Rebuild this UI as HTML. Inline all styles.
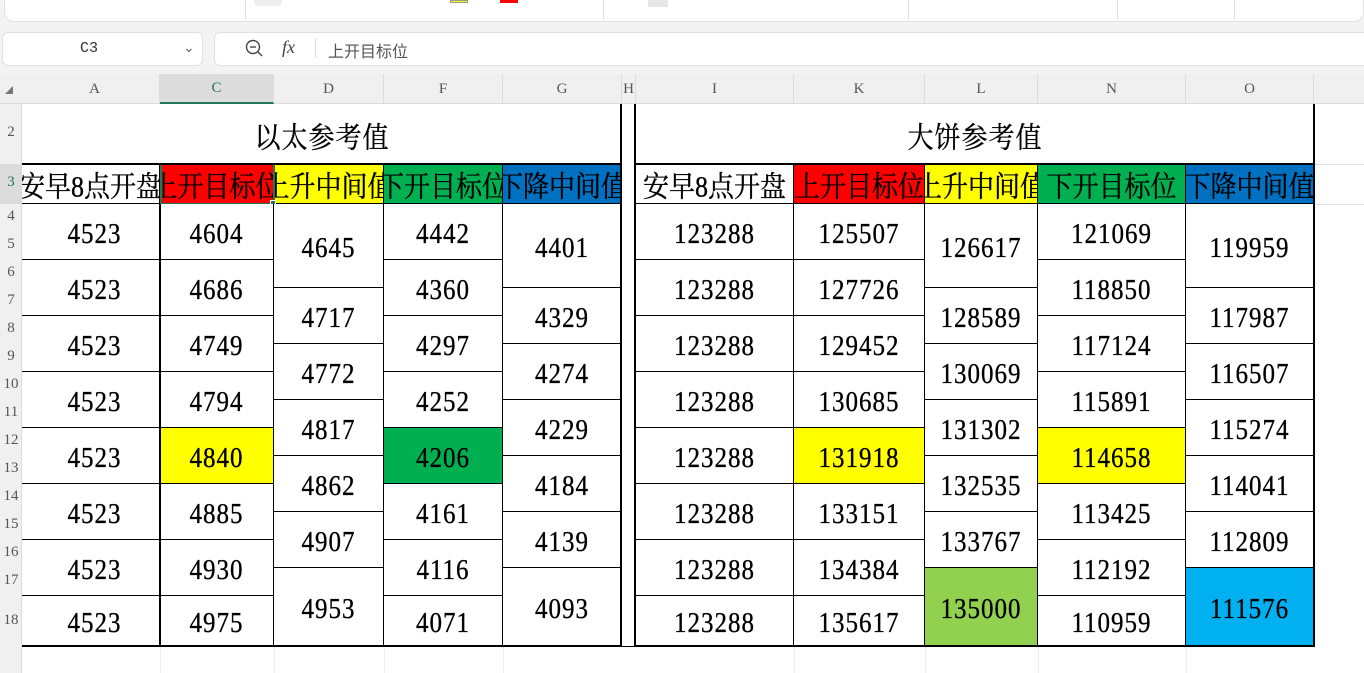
<!DOCTYPE html>
<html><head><meta charset="utf-8"><style>
*{margin:0;padding:0;box-sizing:border-box}
body{width:1364px;height:673px;overflow:hidden;background:#f3f3f3;position:relative;font-family:"Liberation Serif","Noto Serif CJK SC",serif}
.a{position:absolute}
.c{position:absolute;border-right:1px solid #000;border-bottom:1px solid #000;display:flex;align-items:center;justify-content:center;font-size:25px;color:#000;overflow:hidden;white-space:nowrap;background:#fff;padding-top:7px}
.c span{display:inline-block;transform:scale(1,1.12);-webkit-text-stroke:0.3px #000;letter-spacing:1px}
.hd{font-size:26px;padding-top:2px}
.hd span{letter-spacing:0}
.pa{padding-left:8px}
.h{position:absolute;top:74px;height:30px;display:flex;align-items:center;justify-content:center;font:15px "Liberation Serif",serif;color:#555;border-right:1px solid #dcdcdc}
.r{position:absolute;left:0;width:22px;font:15px "Liberation Serif",serif;color:#555;text-align:center}
.y{background:#ffff00}.g{background:#00b050}.lg{background:#92d050}.lb{background:#00b0f0}
</style></head><body>
<div class="a" style="left:4px;top:-10px;width:1360px;height:32px;background:#fff;border-radius:10px;border:1px solid #e2e2e2"></div>
<div class="a" style="left:245px;top:0;width:1px;height:20px;background:#e0e0e0"></div>
<div class="a" style="left:603px;top:0;width:1px;height:20px;background:#e0e0e0"></div>
<div class="a" style="left:908px;top:0;width:1px;height:20px;background:#e0e0e0"></div>
<div class="a" style="left:1117px;top:0;width:1px;height:20px;background:#e0e0e0"></div>
<div class="a" style="left:1234px;top:0;width:1px;height:20px;background:#e0e0e0"></div>
<div class="a" style="left:254px;top:0;width:28px;height:6px;background:#eee;border-radius:0 0 4px 4px"></div>
<div class="a" style="left:450px;top:0;width:18px;height:3px;background:#ff0;border:1px solid #999"></div>
<div class="a" style="left:500px;top:0;width:18px;height:3px;background:#f00"></div>
<div class="a" style="left:648px;top:0;width:20px;height:7px;background:#e6e6e6"></div>
<div class="a" style="left:2px;top:32px;width:201px;height:34px;background:#fff;border:1px solid #e0e0e0;border-radius:6px"></div>
<div class="a" style="left:80px;top:40px;font:15px 'Liberation Mono',monospace;color:#333">C3</div>
<div class="a" style="left:183px;top:39px;font:14px sans-serif;color:#666">&#8964;</div>
<div class="a" style="left:214px;top:32px;width:1160px;height:34px;background:#fff;border:1px solid #e0e0e0;border-radius:6px"></div>
<svg class="a" style="left:244px;top:38px" width="20" height="20"><circle cx="9" cy="9" r="6.5" fill="none" stroke="#444" stroke-width="1.4"/><line x1="6" y1="9" x2="12" y2="9" stroke="#444" stroke-width="1.4"/><line x1="14" y1="14" x2="18" y2="18" stroke="#444" stroke-width="1.4"/></svg>
<div class="a" style="left:282px;top:37px;font:italic 18px 'Liberation Serif',serif;color:#444">fx</div>
<div class="a" style="left:315px;top:38px;width:1px;height:20px;background:#ddd"></div>
<div class="a" style="left:328px;top:38px;font:16px 'Liberation Sans','Noto Sans CJK SC',sans-serif;color:#555">上开目标位</div>
<div class="a" style="left:22px;top:104px;width:1342px;height:569px;background:#fff"></div>
<div class="a" style="left:0;top:74px;width:1364px;height:30px;background:#f0f0f0;border-bottom:1px solid #dcdcdc"></div>
<div class="a" style="left:5px;top:86px;width:0;height:0;border-left:8px solid transparent;border-bottom:8px solid #777"></div>
<div class="h" style="left:30px;width:130px">A</div>
<div class="h" style="left:160px;width:114px;background:#dcdcdc;color:#1e7a55;border-bottom:2px solid #1e7a55">C</div>
<div class="h" style="left:274px;width:110px">D</div>
<div class="h" style="left:384px;width:119px">F</div>
<div class="h" style="left:503px;width:119px">G</div>
<div class="h" style="left:622px;width:14px">H</div>
<div class="h" style="left:636px;width:158px">I</div>
<div class="h" style="left:794px;width:131px">K</div>
<div class="h" style="left:925px;width:113px">L</div>
<div class="h" style="left:1038px;width:148px">N</div>
<div class="h" style="left:1186px;width:128px">O</div>
<div class="h" style="left:1314px;width:60px"></div>
<div class="a" style="left:0;top:104px;width:22px;height:569px;background:#f0f0f0;border-right:1px solid #dcdcdc"></div>
<div class="a" style="left:0;top:164px;width:22px;height:40px;background:#dcdcdc"></div>
<div class="r" style="top:124px">2</div>
<div class="r" style="top:174px;color:#1e7a55">3</div>
<div class="r" style="top:208px">4</div><div class="r" style="top:236px">5</div><div class="r" style="top:264px">6</div><div class="r" style="top:292px">7</div><div class="r" style="top:320px">8</div><div class="r" style="top:348px">9</div><div class="r" style="top:376px">10</div><div class="r" style="top:404px">11</div><div class="r" style="top:432px">12</div><div class="r" style="top:460px">13</div><div class="r" style="top:488px">14</div><div class="r" style="top:516px">15</div><div class="r" style="top:544px">16</div><div class="r" style="top:572px">17</div><div class="r" style="top:612px">18</div>
<div class="a" style="left:1314px;top:164px;width:50px;height:1px;background:#e4e4e4"></div>
<div class="a" style="left:1314px;top:204px;width:50px;height:1px;background:#e4e4e4"></div>
<div class="a" style="left:160px;top:646px;width:1px;height:27px;background:#eee"></div>
<div class="a" style="left:274px;top:646px;width:1px;height:27px;background:#eee"></div>
<div class="a" style="left:384px;top:646px;width:1px;height:27px;background:#eee"></div>
<div class="a" style="left:503px;top:646px;width:1px;height:27px;background:#eee"></div>
<div class="a" style="left:794px;top:646px;width:1px;height:27px;background:#eee"></div>
<div class="a" style="left:925px;top:646px;width:1px;height:27px;background:#eee"></div>
<div class="a" style="left:1038px;top:646px;width:1px;height:27px;background:#eee"></div>
<div class="a" style="left:1186px;top:646px;width:1px;height:27px;background:#eee"></div>
<div class="c" style="left:22px;top:104px;width:600px;height:61px;font-size:26px;border:none;padding-top:2px"><span>以太参考值</span></div>
<div class="c" style="left:636px;top:104px;width:678px;height:61px;font-size:26px;border:none;padding-top:2px"><span>大饼参考值</span></div>
<div class="c hd" style="left:22px;top:164px;width:138px;height:40px"><span>安早8点开盘</span></div>
<div class="c hd" style="left:160px;top:164px;width:114px;height:40px;background:#f00"><span>上开目标位</span></div>
<div class="c hd" style="left:274px;top:164px;width:110px;height:40px;background:#ff0"><span>上升中间值</span></div>
<div class="c hd" style="left:384px;top:164px;width:119px;height:40px;background:#00b050"><span>下开目标位</span></div>
<div class="c hd" style="left:503px;top:164px;width:119px;height:40px;background:#0070c0"><span>下降中间值</span></div>
<div class="c hd" style="left:636px;top:164px;width:158px;height:40px"><span>安早8点开盘</span></div>
<div class="c hd" style="left:794px;top:164px;width:131px;height:40px;background:#f00"><span>上开目标位</span></div>
<div class="c hd" style="left:925px;top:164px;width:113px;height:40px;background:#ff0"><span>上升中间值</span></div>
<div class="c hd" style="left:1038px;top:164px;width:148px;height:40px;background:#00b050"><span>下开目标位</span></div>
<div class="c hd" style="left:1186px;top:164px;width:128px;height:40px;background:#0070c0"><span>下降中间值</span></div>
<div class="a" style="left:160px;top:163px;width:115px;height:42px;border:2px solid #1e7a55"></div>
<div class="a" style="left:270px;top:200px;width:6px;height:6px;background:#1e7a55;border:1px solid #fff"></div>
<div class="c pa" style="left:22px;top:204px;width:138px;height:56px"><span>4523</span></div>
<div class="c pa" style="left:22px;top:260px;width:138px;height:56px"><span>4523</span></div>
<div class="c pa" style="left:22px;top:316px;width:138px;height:56px"><span>4523</span></div>
<div class="c pa" style="left:22px;top:372px;width:138px;height:56px"><span>4523</span></div>
<div class="c pa" style="left:22px;top:428px;width:138px;height:56px"><span>4523</span></div>
<div class="c pa" style="left:22px;top:484px;width:138px;height:56px"><span>4523</span></div>
<div class="c pa" style="left:22px;top:540px;width:138px;height:56px"><span>4523</span></div>
<div class="c pa" style="left:22px;top:596px;width:138px;height:50px"><span>4523</span></div>
<div class="c" style="left:160px;top:204px;width:114px;height:56px"><span>4604</span></div>
<div class="c" style="left:160px;top:260px;width:114px;height:56px"><span>4686</span></div>
<div class="c" style="left:160px;top:316px;width:114px;height:56px"><span>4749</span></div>
<div class="c" style="left:160px;top:372px;width:114px;height:56px"><span>4794</span></div>
<div class="c y" style="left:160px;top:428px;width:114px;height:56px"><span>4840</span></div>
<div class="c" style="left:160px;top:484px;width:114px;height:56px"><span>4885</span></div>
<div class="c" style="left:160px;top:540px;width:114px;height:56px"><span>4930</span></div>
<div class="c" style="left:160px;top:596px;width:114px;height:50px"><span>4975</span></div>
<div class="c" style="left:274px;top:204px;width:110px;height:84px"><span>4645</span></div>
<div class="c" style="left:274px;top:288px;width:110px;height:56px"><span>4717</span></div>
<div class="c" style="left:274px;top:344px;width:110px;height:56px"><span>4772</span></div>
<div class="c" style="left:274px;top:400px;width:110px;height:56px"><span>4817</span></div>
<div class="c" style="left:274px;top:456px;width:110px;height:56px"><span>4862</span></div>
<div class="c" style="left:274px;top:512px;width:110px;height:56px"><span>4907</span></div>
<div class="c" style="left:274px;top:568px;width:110px;height:78px"><span>4953</span></div>
<div class="c" style="left:384px;top:204px;width:119px;height:56px"><span>4442</span></div>
<div class="c" style="left:384px;top:260px;width:119px;height:56px"><span>4360</span></div>
<div class="c" style="left:384px;top:316px;width:119px;height:56px"><span>4297</span></div>
<div class="c" style="left:384px;top:372px;width:119px;height:56px"><span>4252</span></div>
<div class="c g" style="left:384px;top:428px;width:119px;height:56px"><span>4206</span></div>
<div class="c" style="left:384px;top:484px;width:119px;height:56px"><span>4161</span></div>
<div class="c" style="left:384px;top:540px;width:119px;height:56px"><span>4116</span></div>
<div class="c" style="left:384px;top:596px;width:119px;height:50px"><span>4071</span></div>
<div class="c" style="left:503px;top:204px;width:119px;height:84px"><span>4401</span></div>
<div class="c" style="left:503px;top:288px;width:119px;height:56px"><span>4329</span></div>
<div class="c" style="left:503px;top:344px;width:119px;height:56px"><span>4274</span></div>
<div class="c" style="left:503px;top:400px;width:119px;height:56px"><span>4229</span></div>
<div class="c" style="left:503px;top:456px;width:119px;height:56px"><span>4184</span></div>
<div class="c" style="left:503px;top:512px;width:119px;height:56px"><span>4139</span></div>
<div class="c" style="left:503px;top:568px;width:119px;height:78px"><span>4093</span></div>
<div class="c" style="left:636px;top:204px;width:158px;height:56px"><span>123288</span></div>
<div class="c" style="left:636px;top:260px;width:158px;height:56px"><span>123288</span></div>
<div class="c" style="left:636px;top:316px;width:158px;height:56px"><span>123288</span></div>
<div class="c" style="left:636px;top:372px;width:158px;height:56px"><span>123288</span></div>
<div class="c" style="left:636px;top:428px;width:158px;height:56px"><span>123288</span></div>
<div class="c" style="left:636px;top:484px;width:158px;height:56px"><span>123288</span></div>
<div class="c" style="left:636px;top:540px;width:158px;height:56px"><span>123288</span></div>
<div class="c" style="left:636px;top:596px;width:158px;height:50px"><span>123288</span></div>
<div class="c" style="left:794px;top:204px;width:131px;height:56px"><span>125507</span></div>
<div class="c" style="left:794px;top:260px;width:131px;height:56px"><span>127726</span></div>
<div class="c" style="left:794px;top:316px;width:131px;height:56px"><span>129452</span></div>
<div class="c" style="left:794px;top:372px;width:131px;height:56px"><span>130685</span></div>
<div class="c y" style="left:794px;top:428px;width:131px;height:56px"><span>131918</span></div>
<div class="c" style="left:794px;top:484px;width:131px;height:56px"><span>133151</span></div>
<div class="c" style="left:794px;top:540px;width:131px;height:56px"><span>134384</span></div>
<div class="c" style="left:794px;top:596px;width:131px;height:50px"><span>135617</span></div>
<div class="c" style="left:925px;top:204px;width:113px;height:84px"><span>126617</span></div>
<div class="c" style="left:925px;top:288px;width:113px;height:56px"><span>128589</span></div>
<div class="c" style="left:925px;top:344px;width:113px;height:56px"><span>130069</span></div>
<div class="c" style="left:925px;top:400px;width:113px;height:56px"><span>131302</span></div>
<div class="c" style="left:925px;top:456px;width:113px;height:56px"><span>132535</span></div>
<div class="c" style="left:925px;top:512px;width:113px;height:56px"><span>133767</span></div>
<div class="c lg" style="left:925px;top:568px;width:113px;height:78px"><span>135000</span></div>
<div class="c" style="left:1038px;top:204px;width:148px;height:56px"><span>121069</span></div>
<div class="c" style="left:1038px;top:260px;width:148px;height:56px"><span>118850</span></div>
<div class="c" style="left:1038px;top:316px;width:148px;height:56px"><span>117124</span></div>
<div class="c" style="left:1038px;top:372px;width:148px;height:56px"><span>115891</span></div>
<div class="c y" style="left:1038px;top:428px;width:148px;height:56px"><span>114658</span></div>
<div class="c" style="left:1038px;top:484px;width:148px;height:56px"><span>113425</span></div>
<div class="c" style="left:1038px;top:540px;width:148px;height:56px"><span>112192</span></div>
<div class="c" style="left:1038px;top:596px;width:148px;height:50px"><span>110959</span></div>
<div class="c" style="left:1186px;top:204px;width:128px;height:84px"><span>119959</span></div>
<div class="c" style="left:1186px;top:288px;width:128px;height:56px"><span>117987</span></div>
<div class="c" style="left:1186px;top:344px;width:128px;height:56px"><span>116507</span></div>
<div class="c" style="left:1186px;top:400px;width:128px;height:56px"><span>115274</span></div>
<div class="c" style="left:1186px;top:456px;width:128px;height:56px"><span>114041</span></div>
<div class="c" style="left:1186px;top:512px;width:128px;height:56px"><span>112809</span></div>
<div class="c lb" style="left:1186px;top:568px;width:128px;height:78px"><span>111576</span></div>
<div class="a" style="left:22px;top:163px;width:600px;height:2px;background:#000"></div>
<div class="a" style="left:636px;top:163px;width:678px;height:2px;background:#000"></div>
<div class="a" style="left:22px;top:645px;width:1292px;height:2px;background:#000"></div>
<div class="a" style="left:159px;top:204px;width:2px;height:442px;background:#000"></div>
<div class="a" style="left:620px;top:104px;width:2px;height:543px;background:#000"></div>
<div class="a" style="left:634px;top:104px;width:2px;height:543px;background:#000"></div>
<div class="a" style="left:1313px;top:104px;width:2px;height:543px;background:#000"></div>
<div class="a" style="left:622px;top:104px;width:12px;height:542px;background:#fff"></div>
</body></html>
